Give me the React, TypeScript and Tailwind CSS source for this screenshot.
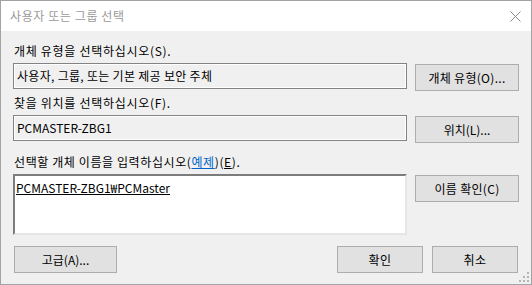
export default function App() {
  return (
    <div className="w-[532px] h-[285px] relative bg-[#f0f0f0] border border-[#a3a3a3] flex flex-col font-['Noto_Sans_CJK_KR','Noto_Sans',sans-serif] text-[12px] text-black overflow-hidden">
      {/* title bar */}
      <div className="h-[30px] shrink-0 bg-white flex items-center justify-between pl-[9px] pr-[9px]">
        <span className="text-[12px] text-[#9a9a9a] leading-[16px] tracking-[0.6px]">사용자 또는 그룹 선택</span>
        <svg width="11" height="11" viewBox="0 0 11 11" className="mr-[1px]">
          <path d="M0.5 0.5 L10.5 10.5 M10.5 0.5 L0.5 10.5" stroke="#8a8a8a" strokeWidth="1" fill="none" />
        </svg>
      </div>

      <div className="flex-1 flex flex-col pl-[12px] pr-[12px] pt-[12px]">
        <div className="h-[16px] leading-[16px] pl-[1px] tracking-[0.7px]">개체 유형을 선택하십시오(S).</div>
        <div className="h-[28px] mt-[4px] flex items-start gap-[8px]">
          <div className="w-[394px] h-[26px] border border-[#838383] shadow-[inset_0_0_0_1px_#ffffff] bg-[#f0f0f0] flex items-center pl-[3px] leading-[16px] tracking-[0.3px]">
            사용자, 그룹, 또는 기본 제공 보안 주체
          </div>
          <button className="w-[104px] h-[27px] mt-[1px] bg-[#e1e1e1] border border-[#adadad] leading-[16px] tracking-[0.3px]">
            개체 유형(O)...
          </button>
        </div>

        <div className="h-[16px] leading-[16px] pl-[1px] mt-[4px] tracking-[0.7px]">찾을 위치를 선택하십시오(F).</div>
        <div className="h-[28px] mt-[4px] flex items-start gap-[8px]">
          <div className="w-[394px] h-[26px] border border-[#838383] shadow-[inset_0_0_0_1px_#ffffff] bg-[#f0f0f0] flex items-center pl-[3px] leading-[16px]">
            PCMASTER-ZBG1
          </div>
          <button className="w-[104px] h-[27px] mt-[1px] bg-[#e1e1e1] border border-[#adadad] leading-[16px]">
            위치(L)...
          </button>
        </div>

        <div className="h-[16px] leading-[16px] pl-[1px] mt-[11px] tracking-[0.6px]">
          선택할 개체 이름을 입력하십시오(
          <span className="text-[#0066cc] underline">예제</span>)(<span className="underline">E</span>).
        </div>
        <div className="h-[61px] mt-[4px] flex items-start gap-[8px]">
          <div className="w-[394px] h-[61px] bg-white border-2 border-t-[#7c7c7c] border-l-[#7c7c7c] border-r-[#e6e6e6] border-b-[#e6e6e6] pl-[1px] pt-[4px] leading-[16px]">
            <span className="underline">PCMASTER-ZBG1₩PCMaster</span>
          </div>
          <button className="w-[104px] h-[27px] mt-[1px] bg-[#e1e1e1] border border-[#adadad] leading-[16px] tracking-[0.3px]">
            이름 확인(C)
          </button>
        </div>

        <div className="mt-[11px] flex items-start">
          <button className="w-[103px] h-[27px] ml-[1px] bg-[#e1e1e1] border border-[#adadad] leading-[16px]">
            고급(A)...
          </button>
          <button className="w-[86px] h-[27px] ml-auto bg-[#e1e1e1] border border-[#adadad] leading-[16px] tracking-[0.5px]">
            확인
          </button>
          <button className="w-[86px] h-[27px] ml-[9px] mr-[1px] bg-[#e1e1e1] border border-[#adadad] leading-[16px] tracking-[0.5px]">
            취소
          </button>
        </div>
      </div>

      {/* resize grip */}
      <svg width="10" height="10" viewBox="0 0 10 10" className="absolute right-[2px] bottom-[2px]">
        <rect x="8" y="0" width="2" height="2" fill="#b4b4b4" />
        <rect x="4" y="4" width="2" height="2" fill="#b4b4b4" />
        <rect x="8" y="4" width="2" height="2" fill="#b4b4b4" />
        <rect x="0" y="8" width="2" height="2" fill="#b4b4b4" />
        <rect x="4" y="8" width="2" height="2" fill="#b4b4b4" />
        <rect x="8" y="8" width="2" height="2" fill="#b4b4b4" />
      </svg>
    </div>
  );
}
